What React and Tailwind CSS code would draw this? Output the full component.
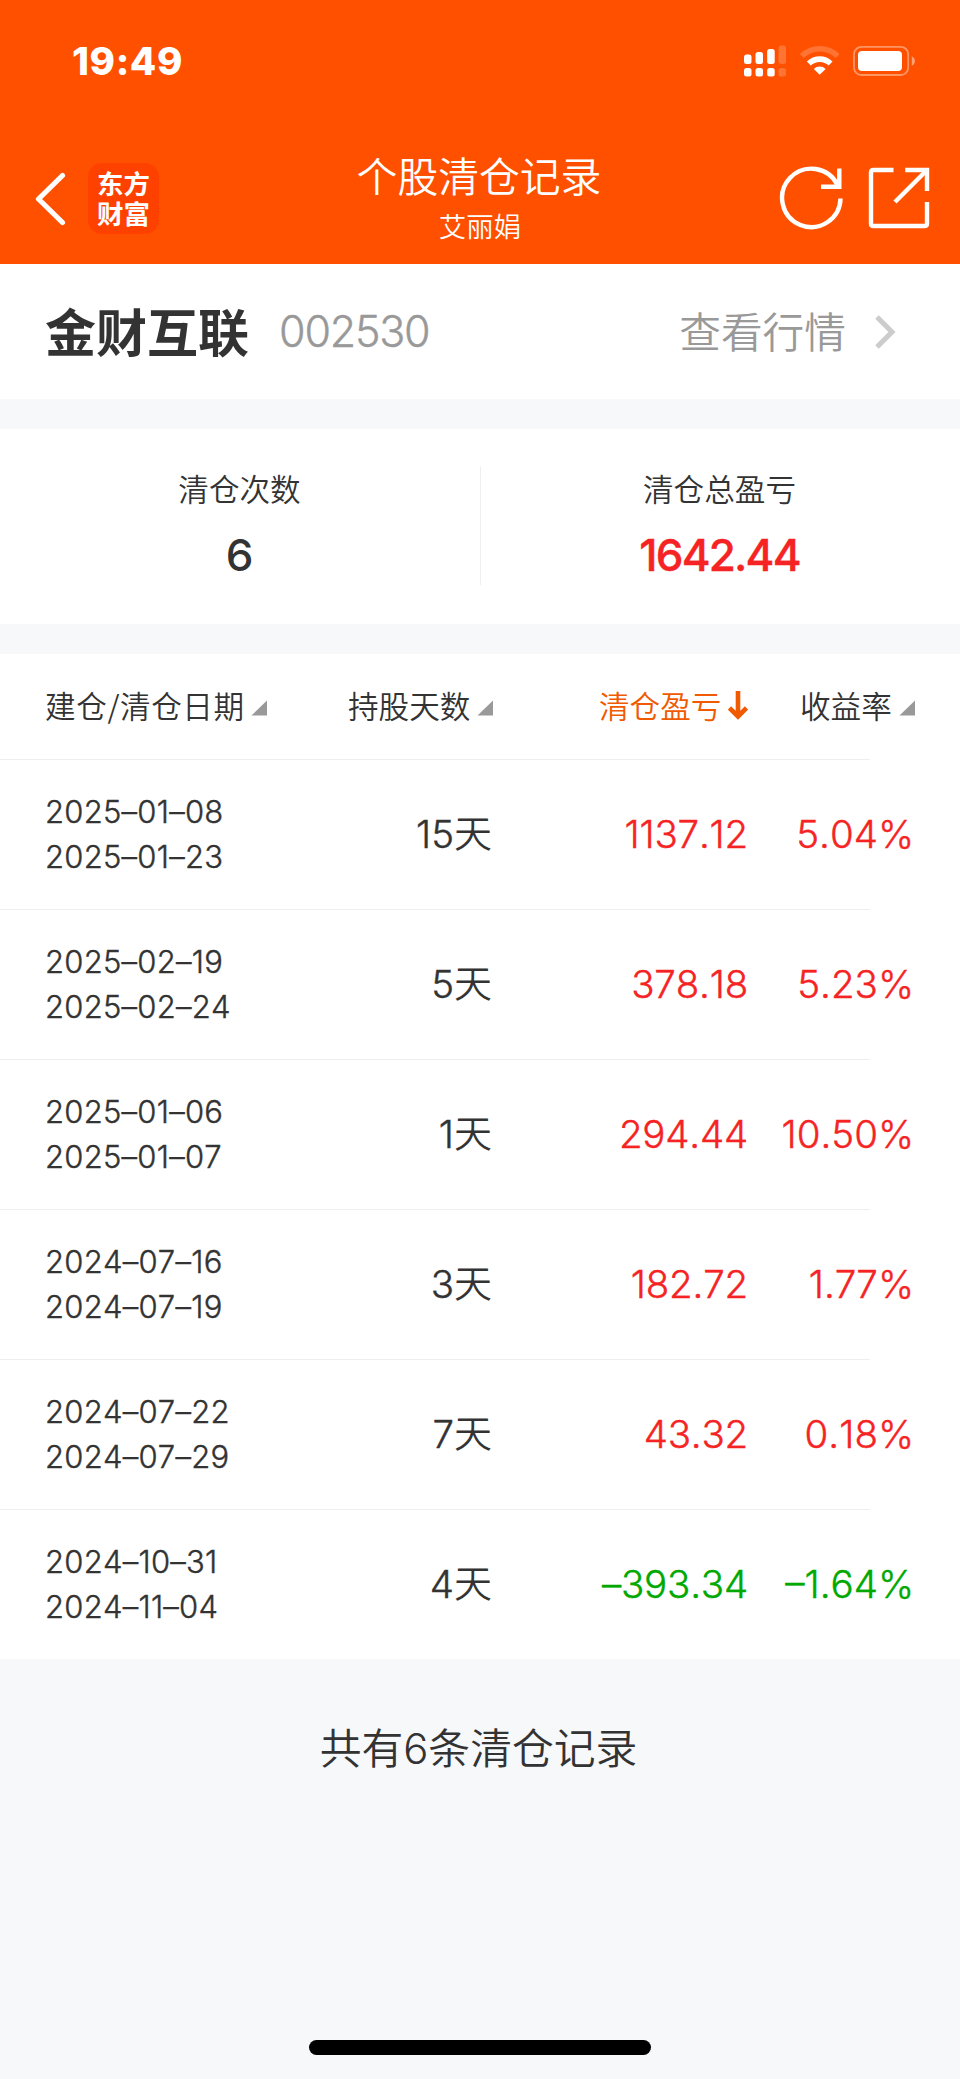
const records = [
  { open: '2025–01–08', close: '2025–01–23', days: '15', profit: '1137.12', rate: '5.04%' },
  { open: '2025–02–19', close: '2025–02–24', days: '5', profit: '378.18', rate: '5.23%' },
  { open: '2025–01–06', close: '2025–01–07', days: '1', profit: '294.44', rate: '10.50%' },
  { open: '2024–07–16', close: '2024–07–19', days: '3', profit: '182.72', rate: '1.77%' },
  { open: '2024–07–22', close: '2024–07–29', days: '7', profit: '43.32', rate: '0.18%' },
  { open: '2024–10–31', close: '2024–11–04', days: '4', profit: '–393.34', rate: '–1.64%' },
];

function StatusIcons() {
  return (
    <svg width="180" height="40" viewBox="740 41 180 40" fill="#fff">
      <rect x="744" y="54.5" width="7.5" height="9.5" rx="2.5" />
      <rect x="755.5" y="52" width="7.5" height="12" rx="2.5" />
      <rect x="767.2" y="49" width="7.5" height="15" rx="2.5" />
      <rect x="778.5" y="45.5" width="7.5" height="18.5" rx="2.5" opacity="0.2" />
      <rect x="744" y="68" width="7.5" height="8.5" rx="2.5" />
      <rect x="755.5" y="68" width="7.5" height="8.5" rx="2.5" />
      <rect x="767.2" y="68" width="7.5" height="8.5" rx="2.5" />
      <rect x="778.5" y="68" width="7.5" height="8.5" rx="2.5" opacity="0.2" />
      <path d="M819.7 74.8 L813.8 68.9 A8.4 8.4 0 0 1 825.6 68.9 Z" />
      <path d="M808.8 63.6 A15.6 15.6 0 0 1 830.6 63.6" fill="none" stroke="#fff" strokeWidth="5.6" />
      <path d="M801.8 56 A25.6 25.6 0 0 1 837.6 56" fill="none" stroke="#fff" strokeWidth="5.6" opacity="0.2" />
      <rect x="854" y="46.8" width="54.2" height="28.2" rx="7.5" fill="none" stroke="#fff" strokeWidth="1.8" opacity="0.4" />
      <rect x="858" y="51" width="44" height="20" rx="4" />
      <path d="M911.8 56.2 C916 58.4 916 63.6 911.8 65.8 Z" opacity="0.45" />
    </svg>
  );
}

function Triangle() {
  return (
    <svg width="16" height="16" viewBox="0 0 16 16" className="mt-[6px]">
      <path d="M16 0.5 V15.5 H0.5 Z" fill="#999" />
    </svg>
  );
}

function Row({ record, last }) {
  const tone = record.profit.startsWith('–') ? 'text-[#00a800]' : 'text-[#f52323]';
  return (
    <div className="h-[150px] font-light [font-kerning:none]">
      <div className="flex h-[149px] items-center pb-[2px] [-webkit-text-stroke:0.4px]">
        <div className="w-[250px] pl-[45px] text-[31px] leading-[45px] tracking-[0.25px] text-[#333]">
          <div>{record.open}</div>
          <div>{record.close}</div>
        </div>
        <div className="flex w-[242px] items-start justify-end text-[#333]">
          <span className="text-[38.5px] leading-[50px]">{record.days}</span>
          <span className="-mt-[3px] font-['Noto_Sans_CJK_SC',sans-serif] text-[38px] leading-[50px] font-[350] [-webkit-text-stroke:0]">天</span>
        </div>
        <div className={`w-[256px] text-right text-[38.5px] leading-[50px] tracking-[-0.2px] ${tone}`}>{record.profit}</div>
        <div className={`w-[166px] text-right text-[38.5px] leading-[50px] ${tone}`}>{record.rate}</div>
      </div>
      {!last && <div className="h-px w-[870px] bg-[#eee]" />}
    </div>
  );
}

export default function App() {
  return (
    <div className="flex h-[2079px] w-[960px] flex-col overflow-hidden bg-[#f7f8fa] font-['Inter','Noto_Sans_CJK_SC',sans-serif] whitespace-nowrap">
      <header className="h-[264px] shrink-0 bg-[#ff5000] text-white">
        <div className="flex h-[124px] items-center justify-between pr-[40px] pb-[2px] pl-[72px]">
          <span className="text-[38.5px] leading-[50px] font-extrabold tracking-[0.6px]">19:49</span>
          <StatusIcons />
        </div>
        <div className="grid h-[140px] grid-cols-[300px_360px_300px] font-['Noto_Sans_CJK_SC',sans-serif]">
          <div className="flex items-start pt-[39px] pl-[34px]">
            <svg width="32" height="72" viewBox="34 163 32 72" fill="none" stroke="#fff" strokeWidth="5.2" strokeLinecap="round" strokeLinejoin="round">
              <path d="M62.5 175.5 L38.5 199 L62.5 222.5" />
            </svg>
            <div className="ml-[22px] flex h-[71px] w-[71px] items-center justify-center rounded-[14px] bg-[#ff4100] pb-[2px]">
              <p className="w-[54px] text-center text-[26.5px] leading-[30px] font-bold whitespace-normal">东方财富</p>
            </div>
          </div>
          <div className="flex flex-col items-center pt-[21px]">
            <h1 className="pr-[2px] text-[40.8px] leading-[60px] font-[350]">个股清仓记录</h1>
            <p className="text-[27.5px] leading-[40px] font-[350]">艾丽娟</p>
          </div>
          <div className="flex justify-end pt-[36px] pr-[28px]">
            <svg width="156" height="72" viewBox="776 160 156 72" fill="none" stroke="#fff" strokeWidth="4.4">
              <path d="M840.5 198.5 A29.2 29.2 0 1 1 837.5 185" />
              <path d="M839.3 168.5 V186.8 H821" />
              <path d="M893.5 170 H873.5 Q871 170 871 172.5 V223.5 Q871 226 873.5 226 H924.5 Q927 226 927 223.5 V202" />
              <path d="M905.2 170 H927 V191" />
              <path d="M926.5 170.5 L895 202" />
            </svg>
          </div>
        </div>
      </header>

      <section className="flex h-[135px] shrink-0 items-center bg-white pb-[4px] pl-[45px] font-['Noto_Sans_CJK_SC',sans-serif]">
        <h2 className="text-[51px] leading-[60px] font-bold text-[#333]">金财互联</h2>
        <span className="mt-[3px] ml-[30px] font-['Inter',sans-serif] text-[43px] leading-[60px] font-light tracking-[-1.2px] text-[#999] [-webkit-text-stroke:0.4px]">002530</span>
        <span className="ml-auto text-[41.7px] leading-[60px] font-[350] text-[#999]">查看行情</span>
        <svg className="mt-[4px] mr-[63px] ml-[29px]" width="22" height="34" viewBox="0 0 22 34" fill="none" stroke="#ccc" strokeWidth="5">
          <path d="M2 2 L17 17 L2 32" />
        </svg>
      </section>

      <section className="mt-[30px] flex h-[195px] shrink-0 bg-white text-center text-[#333]">
        <div className="w-[479px] pt-[37px]">
          <div className="font-['Noto_Sans_CJK_SC',sans-serif] text-[30.6px] leading-[44px] font-[350]">清仓次数</div>
          <div className="mt-[15px] text-[44px] leading-[60px] font-medium">6</div>
        </div>
        <div className="mt-[38px] ml-px h-[118px] w-px bg-[#eee]" />
        <div className="w-[477px] pt-[37px]">
          <div className="font-['Noto_Sans_CJK_SC',sans-serif] text-[30.6px] leading-[44px] font-[350]">清仓总盈亏</div>
          <div className="mt-[15px] text-[44px] leading-[60px] font-medium tracking-[-1.8px] text-[#f52323] [-webkit-text-stroke:0.4px]">1642.44</div>
        </div>
      </section>

      <section className="mt-[30px] h-[1005px] shrink-0 bg-white">
        <div className="flex h-[105px] items-center pb-[4px] pl-[45px] font-['Noto_Sans_CJK_SC',sans-serif] text-[30.6px] leading-[44px] font-[350] text-[#333]">
          <div className="flex w-[303px] items-center gap-[6px]">
            <span className="tracking-[0.6px]">建仓/清仓日期</span>
            <Triangle />
          </div>
          <div className="flex w-[251px] items-center gap-[7px]">
            <span>持股天数</span>
            <Triangle />
          </div>
          <div className="flex w-[201px] items-center gap-[7px] text-[#f05a00]">
            <span>清仓盈亏</span>
            <svg className="mt-[2px]" width="20" height="29" viewBox="0 0 20 29" fill="none" stroke="#f05a00" strokeWidth="4.6">
              <path d="M10 0 V25 M1.5 17 L10 25.5 L18.5 17" />
            </svg>
          </div>
          <div className="flex items-center gap-[7px]">
            <span>收益率</span>
            <Triangle />
          </div>
        </div>
        <div className="h-px w-[870px] bg-[#eee]" />
        {records.map((record, i) => (
          <Row key={record.open} record={record} last={i === records.length - 1} />
        ))}
      </section>

      <p className="mt-[60px] flex items-center justify-center pr-[3px] text-[41.8px] leading-[60px] font-[350] text-[#333]">
        共有6条清仓记录
      </p>
      <div className="mx-auto mt-auto mb-[24px] h-[15px] w-[342px] rounded-full bg-black" />
    </div>
  );
}
